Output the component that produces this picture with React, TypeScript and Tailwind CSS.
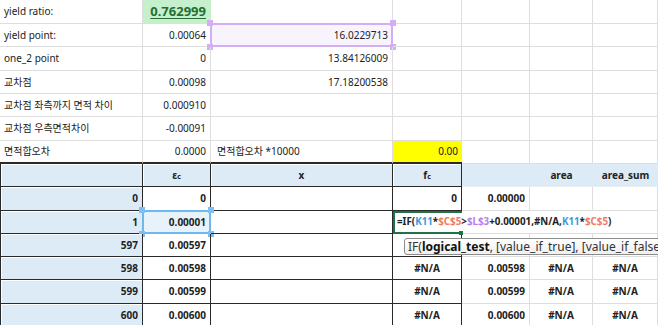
import type { ReactNode } from "react";
import clsx from "clsx";

const grid = "border-r border-b border-[#dedede]";
const tbl = "border-r border-b border-[#2a2a2a]";
const blue = "bg-[#ddebf7]";

function Cell({ className, children }: { className?: string; children?: ReactNode }) {
  return (
    <div className={clsx("relative flex items-center whitespace-nowrap px-[4px]", className)}>
      {children}
    </div>
  );
}

function Handles({ color }: { color: string }) {
  return (
    <>
      <span className={clsx("absolute -left-[4px] -top-[4px] h-[6px] w-[6px]", color)} />
      <span className={clsx("absolute -right-[4px] -top-[4px] h-[6px] w-[6px]", color)} />
      <span className={clsx("absolute -left-[4px] -bottom-[4px] h-[6px] w-[6px]", color)} />
      <span className={clsx("absolute -right-[4px] -bottom-[4px] h-[6px] w-[6px]", color)} />
    </>
  );
}

const topRows: { h: string; a: string; b: ReactNode; c?: ReactNode }[] = [
  { h: "h-[24px]", a: "yield ratio:", b: null },
  { h: "h-[23px]", a: "yield point:", b: "0.00064", c: "16.0229713" },
  { h: "h-[24px]", a: "one_2 point", b: "0", c: "13.84126009" },
  { h: "h-[23px]", a: "교차점", b: "0.00098", c: "17.18200538" },
  { h: "h-[23px]", a: "교차점 좌측까지 면적 차이", b: "0.000910" },
  { h: "h-[24px]", a: "교차점 우측면적차이", b: "-0.00091" },
];

// row 597 sits under the function tooltip, so its right-hand values are hidden
const tailRows = [
  { h: "h-[23px]", n: "597", e: "0.00597", hidden: true },
  { h: "h-[23px]", n: "598", e: "0.00598", hidden: false },
  { h: "h-[24px]", n: "599", e: "0.00599", hidden: false },
  { h: "h-[23px]", n: "600", e: "0.00600", hidden: false },
];

export default function App() {
  return (
    <div className="relative h-[325px] w-[658px] overflow-hidden bg-white font-['Noto_Sans','Noto_Sans_CJK_KR',sans-serif] text-[10px] text-[#222]">
      <div className="grid grid-cols-[143px_68px_182px_69px_68px_63px_65px]">
        {/* ── top block ── */}
        {topRows.map((r, i) => (
          <div key={r.a} className="contents">
            <Cell className={clsx(grid, r.h)}>{r.a}</Cell>
            {i === 0 ? (
              <Cell className={clsx(r.h, "justify-end border-r border-b border-[#c6efce] bg-[#c6efce] text-[13px] font-bold text-[#25702e] underline underline-offset-2")}>
                0.762999
              </Cell>
            ) : (
              <Cell className={clsx(grid, r.h, "justify-end")}>{r.b}</Cell>
            )}
            {i === 1 ? (
              <Cell className={clsx(grid, r.h, "justify-end bg-[#f8f4fd]")}>
                {r.c}
                <span className="absolute -inset-[1px] border-2 border-[#d3aef5]" />
                <Handles color="bg-[#d3aef5]" />
              </Cell>
            ) : (
              <Cell className={clsx(grid, r.h, "justify-end")}>{r.c}</Cell>
            )}
            <Cell className={clsx(grid, r.h)} />
            <Cell className={clsx(grid, r.h)} />
            <Cell className={clsx(grid, r.h)} />
            <Cell className={clsx(grid, r.h)} />
          </div>
        ))}

        {/* 면적합오차 row */}
        <Cell className="h-[23px] border-r border-[#dedede] border-b-2 border-b-[#2a2a2a]">면적합오차</Cell>
        <Cell className="h-[23px] justify-end border-r border-[#dedede] border-b-2 border-b-[#2a2a2a]">0.0000</Cell>
        <Cell className="h-[23px] border-r border-[#dedede] border-b-2 border-b-[#2a2a2a] pl-[6px]">면적합오차 *10000</Cell>
        <Cell className="h-[23px] justify-end border-b-2 border-b-[#2a2a2a] bg-[#ffff00]">0.00</Cell>
        <Cell className={clsx(grid, "h-[23px]")} />
        <Cell className={clsx(grid, "h-[23px]")} />
        <Cell className={clsx(grid, "h-[23px]")} />

        {/* ── header ── */}
        <Cell className={clsx(tbl, blue, "h-[23px] border-l shadow-[inset_1px_1px_0_#fff]")} />
        <Cell className={clsx(tbl, blue, "h-[23px] justify-center font-bold shadow-[inset_1px_1px_0_#fff]")}>
          ε<sub className="text-[7px]">c</sub>
        </Cell>
        <Cell className={clsx(tbl, blue, "h-[23px] justify-center font-bold shadow-[inset_1px_1px_0_#fff]")}>x</Cell>
        <Cell className={clsx(tbl, blue, "h-[23px] justify-center font-bold shadow-[inset_1px_1px_0_#fff]")}>
          f<sub className="text-[7px]">c</sub>
        </Cell>
        <Cell className={clsx(blue, "h-[23px] border-b border-[#e8eef5]")} />
        <Cell className={clsx(blue, "h-[23px] justify-center border-b border-[#e8eef5] font-bold")}>area</Cell>
        <Cell className={clsx(blue, "h-[23px] justify-center border-b border-[#e8eef5] font-bold")}>area_sum</Cell>

        {/* row 0 */}
        <Cell className={clsx(tbl, blue, "h-[24px] justify-end border-l font-bold shadow-[inset_1px_1px_0_#fff]")}>0</Cell>
        <Cell className={clsx(tbl, "h-[24px] justify-end font-bold")}>0</Cell>
        <Cell className={clsx(tbl, "h-[24px]")} />
        <Cell className={clsx(tbl, "h-[24px] justify-end font-bold")}>0</Cell>
        <Cell className={clsx(grid, "h-[24px] justify-end font-bold")}>0.00000</Cell>
        <Cell className={clsx(grid, "h-[24px]")} />
        <Cell className={clsx(grid, "h-[24px]")} />

        {/* row 1 — editing */}
        <Cell className={clsx(tbl, blue, "h-[23px] justify-end border-l font-bold shadow-[inset_1px_1px_0_#fff]")}>1</Cell>
        <Cell className={clsx(tbl, "h-[23px] justify-end bg-[#e8f2fb] font-bold")}>
          0.00001
          <span className="absolute -inset-[1px] border-2 border-[#6fb7ef]" />
          <Handles color="bg-[#7dbff2]" />
        </Cell>
        <Cell className={clsx(tbl, "h-[23px]")} />
        <Cell className="h-[23px] border-2 border-[#1f7244]">
          <span className="absolute left-0 top-0 z-10 flex h-full items-center bg-white pl-[2px] pr-[2px] text-[9.8px] font-bold">
            =IF(<span className="text-[#3b9be0]">K11</span>*<span className="text-[#ee7b64]">$C$5</span>&gt;
            <span className="text-[#b77fe9]">$L$3</span>+0.00001,#N/A,<span className="text-[#3b9be0]">K11</span>*
            <span className="text-[#ee7b64]">$C$5</span>)
          </span>
          <span className="absolute -bottom-[3px] -right-[3px] z-20 h-[4px] w-[4px] bg-[#1f7244]" />
        </Cell>
        <Cell className="h-[23px] border-b border-[#dedede]" />
        <Cell className="h-[23px] border-b border-[#dedede]" />
        <Cell className={clsx(grid, "h-[23px]")} />

        {/* tail rows */}
        {tailRows.map((r) => (
          <div key={r.n} className="contents">
            <Cell className={clsx(tbl, blue, r.h, "justify-end border-l font-bold shadow-[inset_1px_1px_0_#fff]")}>{r.n}</Cell>
            <Cell className={clsx(tbl, r.h, "justify-end font-bold")}>{r.e}</Cell>
            <Cell className={clsx(tbl, r.h)} />
            <Cell className={clsx(tbl, r.h, "justify-center font-bold")}>{r.hidden ? null : "#N/A"}</Cell>
            <Cell className={clsx(grid, r.h, "justify-end font-bold")}>{r.hidden ? null : r.e}</Cell>
            <Cell className={clsx(grid, r.h, "justify-center font-bold")}>{r.hidden ? null : "#N/A"}</Cell>
            <Cell className={clsx(grid, r.h, "justify-center font-bold")}>{r.hidden ? null : "#N/A"}</Cell>
          </div>
        ))}
      </div>

      {/* function tooltip */}
      <div className="absolute left-[404px] top-[238px] z-30 flex h-[17px] items-center whitespace-nowrap rounded-[3px] border border-[#8c8c8c] bg-gradient-to-b from-white to-[#efefef] px-[3px] text-[12px] text-[#333]">
        IF(<span className="font-bold text-[#111]">logical_test</span>, [value_if_true], [value_if_false])
      </div>
    </div>
  );
}
